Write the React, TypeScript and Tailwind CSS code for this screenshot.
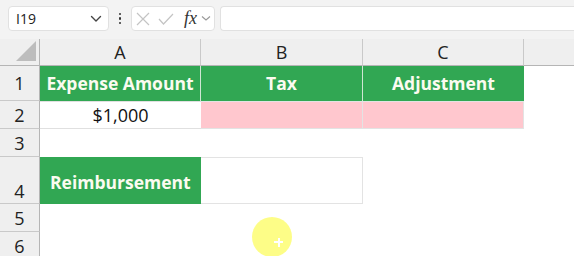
import React from "react";

const font = { fontFamily: '"Open Sans", "Noto Sans", sans-serif' };
const cellFont = { fontFamily: '"Open Sans", "Noto Sans", sans-serif' };

function Chevron({ className = "" }: { className?: string }) {
  return (
    <svg className={className} width="12" height="8" viewBox="0 0 12 8" fill="none">
      <path d="M1.5 1.5 L6 6 L10.5 1.5" stroke="#444" strokeWidth="1.4" strokeLinecap="round" strokeLinejoin="round" />
    </svg>
  );
}

export default function App() {
  const rows = [
    { n: "1", h: 35 },
    { n: "2", h: 28 },
    { n: "3", h: 28 },
    { n: "4", h: 47 },
    { n: "5", h: 28 },
    { n: "6", h: 28 },
  ];
  return (
    <div className="relative w-[574px] h-[256px] overflow-hidden bg-white" style={font}>
      {/* toolbar */}
      <div className="h-[39px] bg-[#f3f3f3] flex items-start pt-[6px] pl-[8px] gap-0">
        <div className="w-[101px] h-[25px] bg-white border border-[#e1e1e1] rounded-[4px] flex items-center justify-between pl-[7px] pr-[6px]">
          <span className="text-[14px] text-[#222] leading-none">I19</span>
          <Chevron />
        </div>
        <div className="w-[22px] h-[25px] flex flex-col items-center justify-center gap-[2px]">
          <span className="w-[2.5px] h-[2.5px] rounded-full bg-[#333]" />
          <span className="w-[2.5px] h-[2.5px] rounded-full bg-[#333]" />
          <span className="w-[2.5px] h-[2.5px] rounded-full bg-[#333]" />
        </div>
        <div className="w-[84px] h-[25px] bg-white border border-[#e1e1e1] rounded-[4px] flex items-center pl-[4px]">
          <svg width="14" height="14" viewBox="0 0 14 14">
            <path d="M1 1 L13 13 M13 1 L1 13" stroke="#c4c4c4" strokeWidth="1.2" />
          </svg>
          <svg width="16" height="14" viewBox="0 0 16 14" className="ml-[8px]">
            <path d="M1 7 L5.5 12 L15 2" stroke="#c4c4c4" strokeWidth="1.2" fill="none" />
          </svg>
          <span className="ml-[10px] text-[18px] italic text-[#333] leading-none -mt-[2px]" style={{ fontFamily: '"Liberation Serif", serif' }}>fx</span>
          <svg width="10" height="7" viewBox="0 0 10 7" className="ml-[4px]">
            <path d="M1 1.5 L5 5 L9 1.5" stroke="#999" strokeWidth="1.1" fill="none" />
          </svg>
        </div>
        <div className="ml-[5px] flex-1 h-[25px] bg-white border border-[#e1e1e1] rounded-l-[4px] border-r-0" />
      </div>

      {/* grid */}
      <div
        className="grid"
        style={{
          gridTemplateColumns: "40px 161px 162px 161px 1fr",
          gridTemplateRows: "27px 35px 28px 28px 47px 28px 28px",
        }}
      >
        {/* header row */}
        <div className="bg-[#efefef] border-r border-b border-[#b5b5b5] flex items-end justify-end pr-[3px] pb-[4px]">
          <svg width="20" height="20" viewBox="0 0 20 20">
            <path d="M20 0 L20 20 L0 20 Z" fill="#bdbdbd" />
          </svg>
        </div>
        {["A", "B", "C"].map((c) => (
          <div key={c} className="bg-[#efefef] border-r border-b border-r-[#c9c9c9] border-b-[#b5b5b5] flex items-center justify-center text-[18px] text-[#222]">
            {c}
          </div>
        ))}
        <div className="bg-[#efefef] border-b border-[#b5b5b5]" />

        {rows.map((r, i) => (
          <React.Fragment key={r.n}>
            <div className={`bg-[#efefef] border-r border-b border-r-[#b5b5b5] border-b-[#c9c9c9] flex justify-center text-[18px] text-[#222] leading-none ${r.n === "4" ? "items-end pb-[3px]" : "items-center"}`}>
              {r.n}
            </div>
            {i === 0 && (
              <>
                <div className="bg-[#31a753] border-r border-[#cfe6d3] flex items-center justify-center text-[17.5px] font-bold text-[#fbfbf0]" style={cellFont}>Expense Amount</div>
                <div className="bg-[#31a753] border-r border-[#cfe6d3] flex items-center justify-center text-[17.5px] font-bold text-[#fbfbf0]" style={cellFont}>Tax</div>
                <div className="bg-[#31a753] flex items-center justify-center text-[17.5px] font-bold text-[#fbfbf0]" style={cellFont}>Adjustment</div>
                <div />
              </>
            )}
            {i === 1 && (
              <>
                <div className="border-t border-b border-[#e0e0e0] flex items-center justify-center text-[18px] text-[#111]" style={cellFont}>$1,000</div>
                <div className="bg-[#ffc7ce] border-t border-b border-r border-[#e3e3e3]" />
                <div className="bg-[#ffc7ce] border-t border-b border-r border-[#e3e3e3]" />
                <div />
              </>
            )}
            {i === 2 && (
              <>
                <div /><div /><div /><div />
              </>
            )}
            {i === 3 && (
              <>
                <div className="bg-[#31a753] flex items-center justify-start pl-[10px] pt-[3px] text-[17.5px] font-bold text-[#fbfbf0]" style={cellFont}>Reimbursement</div>
                <div className="border border-l-0 border-[#e3e3e3]" />
                <div /><div />
              </>
            )}
            {i > 3 && (
              <>
                <div /><div /><div /><div />
              </>
            )}
          </React.Fragment>
        ))}
      </div>

      {/* cursor highlight */}
      <div className="absolute left-[252px] top-[217px] w-[40px] h-[40px] rounded-full bg-[#fdfd7a] opacity-90" />
      <div className="absolute left-[274px] top-[241px] w-[9px] h-[2px] bg-white" />
      <div className="absolute left-[277.5px] top-[237.5px] w-[2px] h-[9px] bg-white" />
    </div>
  );
}
